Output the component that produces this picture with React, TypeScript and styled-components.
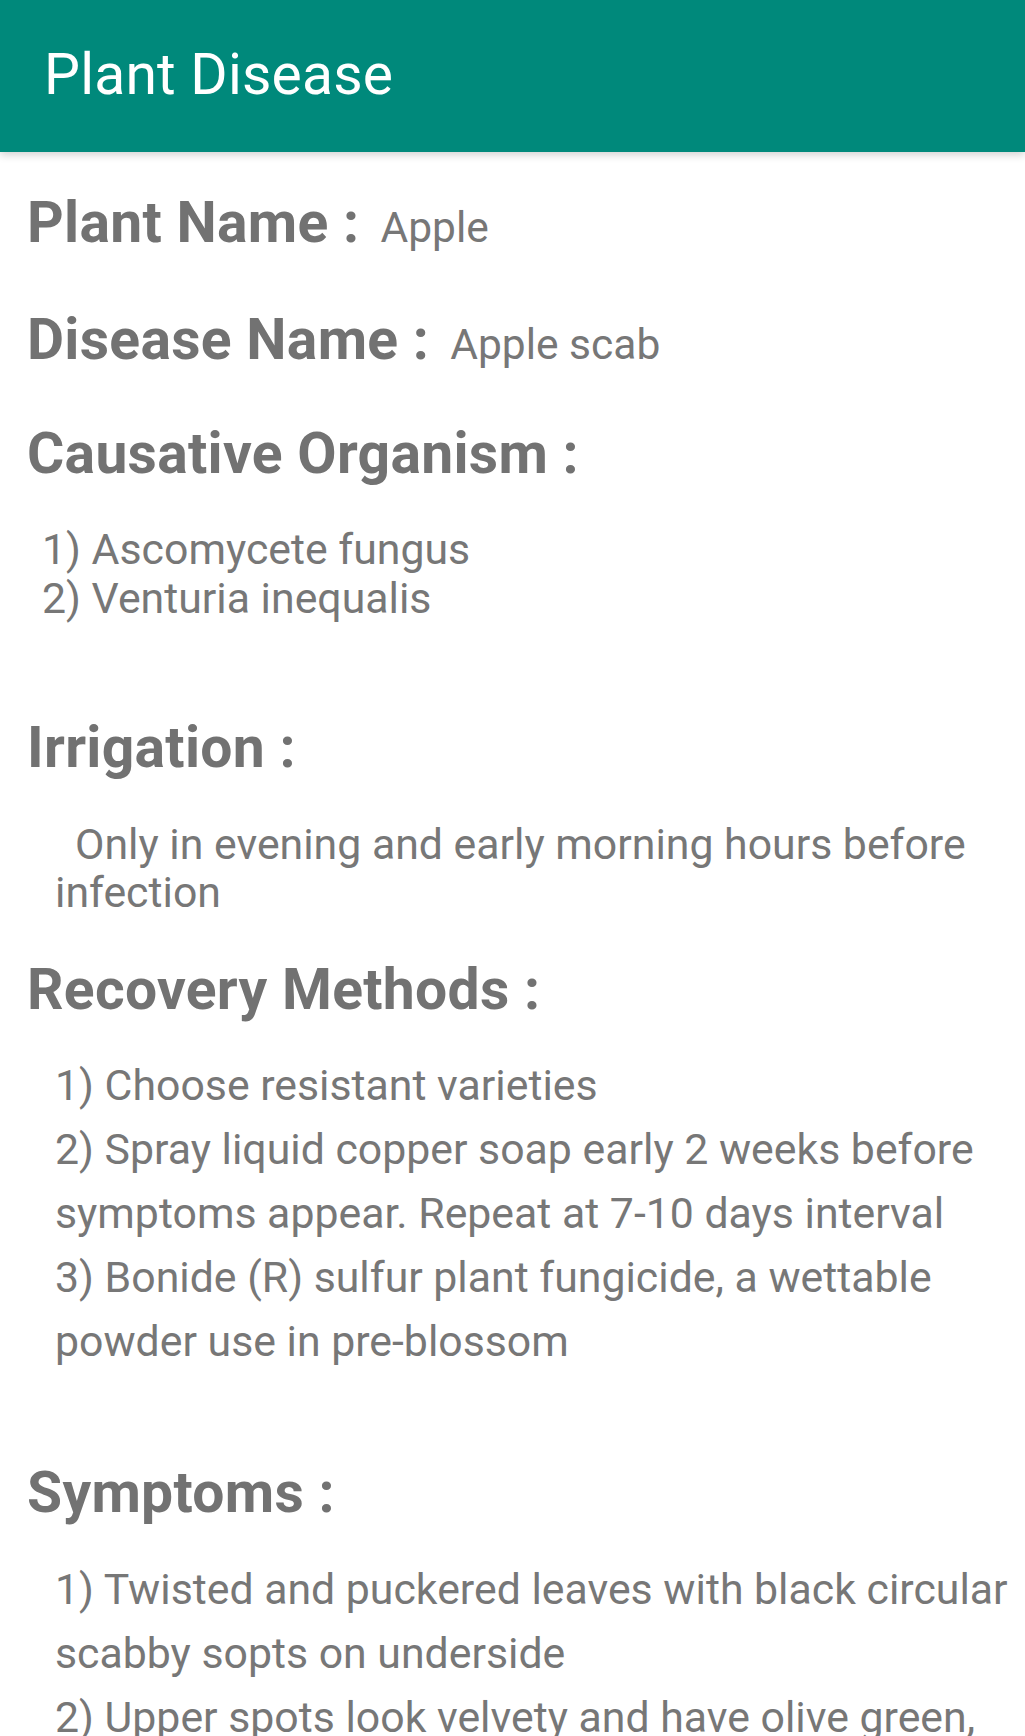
import React from "react";
import styled, { createGlobalStyle } from "styled-components";

const GlobalStyle = createGlobalStyle`
  html, body {
    margin: 0;
    padding: 0;
    background: #ffffff;
  }
  body {
    font-family: Roboto, "Noto Sans", "Liberation Sans", sans-serif;
    -webkit-font-smoothing: antialiased;
  }
`;

const Screen = styled.div`
  width: 1025px;
  min-height: 1736px;
  background: #ffffff;
  overflow: hidden;
`;

const Toolbar = styled.header`
  height: 152px;
  background: #00897b;
  display: flex;
  align-items: center;
  padding-left: 44px;
  box-shadow: 0 3px 8px rgba(0, 0, 0, 0.18);
  position: relative;
  z-index: 1;
`;

const Title = styled.h1`
  margin: 0;
  margin-top: -4px;
  font-family: Roboto, sans-serif;
  font-weight: 400;
  font-size: 57px;
  color: #ffffff;
  letter-spacing: 0.2px;
`;

const Content = styled.main`
  padding: 0 0 0 27px;
  display: flex;
  flex-direction: column;
`;

const FieldRow = styled.div<{ $top: number }>`
  display: flex;
  align-items: baseline;
  gap: 21px;
  margin-top: ${(p) => p.$top}px;
`;

const Heading = styled.h2<{ $top?: number }>`
  margin: ${(p) => p.$top ?? 0}px 0 0 0;
  font-family: Roboto, sans-serif;
  font-weight: 700;
  font-size: 57px;
  line-height: 68px;
  letter-spacing: 0.3px;
  color: #727272;
`;

const Value = styled.span`
  font-family: Roboto, sans-serif;
  font-weight: 400;
  font-size: 42.5px;
  color: #777777;
`;

const List = styled.div<{ $top: number; $indent: number; $lh: number }>`
  margin-top: ${(p) => p.$top}px;
  padding-left: ${(p) => p.$indent}px;
  font-family: Roboto, sans-serif;
  font-size: 42.8px;
  line-height: ${(p) => p.$lh}px;
  color: #777777;
`;

const Line = styled.div``;

const Paragraph = styled.p<{ $top: number; $indent: number; $lead: number }>`
  margin: ${(p) => p.$top}px 0 0 0;
  padding-left: ${(p) => p.$indent}px;
  text-indent: ${(p) => p.$lead}px;
  font-family: Roboto, sans-serif;
  font-size: 42.8px;
  line-height: 48px;
  color: #777777;
`;

export default function App() {
  return (
    <Screen>
      <GlobalStyle />
      <Toolbar>
        <Title>Plant Disease</Title>
      </Toolbar>
      <Content>
        <FieldRow $top={37}>
          <Heading>Plant Name :</Heading>
          <Value>Apple</Value>
        </FieldRow>
        <FieldRow $top={49}>
          <Heading>Disease Name :</Heading>
          <Value>Apple scab</Value>
        </FieldRow>

        <Heading $top={46}>Causative Organism :</Heading>
        <List $top={37} $indent={15} $lh={49}>
          <Line>1) Ascomycete fungus</Line>
          <Line>2) Venturia inequalis</Line>
        </List>

        <Heading $top={91}>Irrigation :</Heading>
        <Paragraph $top={38} $indent={28} $lead={20}>
          Only in evening and early morning hours before infection
        </Paragraph>

        <Heading $top={40}>Recovery Methods :</Heading>
        <List $top={29} $indent={28} $lh={64}>
          <Line>1) Choose resistant varieties</Line>
          <Line>
            2) Spray liquid copper soap early 2 weeks before symptoms appear.
            Repeat at 7-10 days interval
          </Line>
          <Line>
            3) Bonide (R) sulfur plant fungicide, a wettable powder use in
            pre-blossom
          </Line>
        </List>

        <Heading $top={86}>Symptoms :</Heading>
        <List $top={30} $indent={28} $lh={64}>
          <Line>
            1) Twisted and puckered leaves with black circular scabby sopts on
            underside
          </Line>
          <Line>
            2) Upper spots look velvety and have olive green, later turn brown
            and become corky
          </Line>
        </List>
      </Content>
    </Screen>
  );
}
